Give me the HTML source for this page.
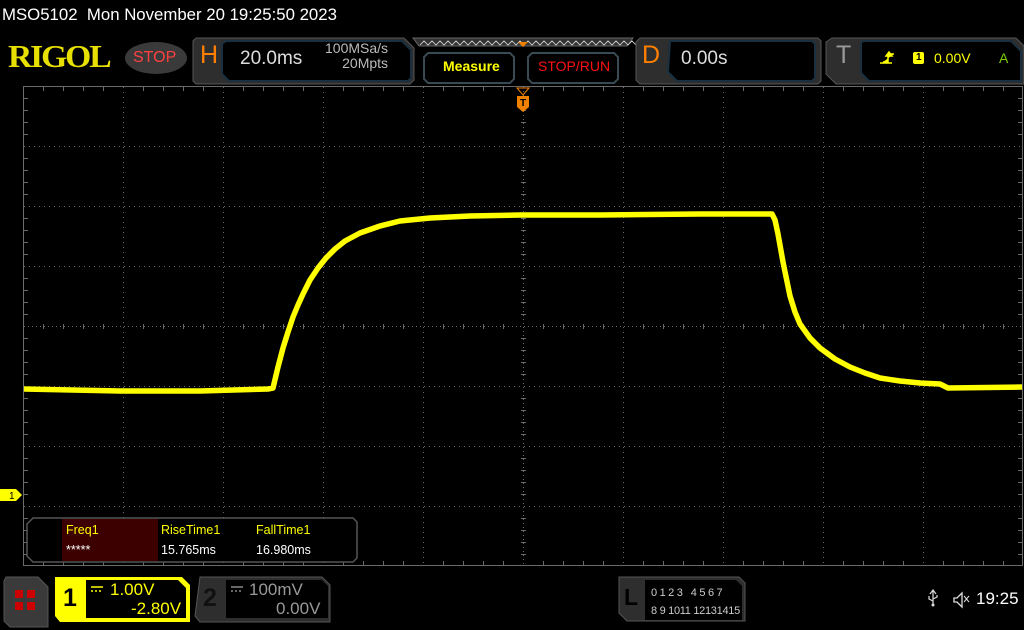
<!DOCTYPE html>
<html><head><meta charset="utf-8"><style>
body{margin:0;width:1024px;height:630px;background:#000;overflow:hidden;position:relative;font-family:"Liberation Sans","DejaVu Sans",sans-serif;}
.t{position:absolute;white-space:nowrap;}
</style></head><body>
<svg width="1024" height="630" style="position:absolute;left:0;top:0">
<g stroke="#6a6a6a" stroke-width="1" stroke-dasharray="1,4" fill="none">
<path d="M123.5 87V566M223.5 87V566M323.5 87V566M423.5 87V566M623.5 87V566M723.5 87V566M823.5 87V566M923.5 87V566"/>
<path d="M24 146.5H1022M24 206.5H1022M24 266.5H1022M24 386.5H1022M24 446.5H1022M24 506.5H1022"/>
<path d="M24 326.5H1022M523.5 87V566" stroke-dasharray="1,3"/>
</g>
<g stroke="#6a6a6a" stroke-width="1">
<path d="M23.5 86V566M23.5 86.5H1022M23.5 565.5H1022M1022.5 86V566"/>
</g>
<g stroke="#6a6a6a">
<path id="tx" d="M43.5 86v5M63.5 86v5M83.5 86v5M103.5 86v5M143.5 86v5M163.5 86v5M183.5 86v5M203.5 86v5M243.5 86v5M263.5 86v5M283.5 86v5M303.5 86v5M343.5 86v5M363.5 86v5M383.5 86v5M403.5 86v5M443.5 86v5M463.5 86v5M483.5 86v5M503.5 86v5M543.5 86v5M563.5 86v5M583.5 86v5M603.5 86v5M643.5 86v5M663.5 86v5M683.5 86v5M703.5 86v5M743.5 86v5M763.5 86v5M783.5 86v5M803.5 86v5M843.5 86v5M863.5 86v5M883.5 86v5M903.5 86v5M943.5 86v5M963.5 86v5M983.5 86v5M1003.5 86v5"/>
<use href="#tx" transform="translate(0,475)"/>
<use href="#tx" transform="translate(0,238)"/>
<path id="ty" d="M23 98.5h5M23 110.5h5M23 122.5h5M23 134.5h5M23 158.5h5M23 170.5h5M23 182.5h5M23 194.5h5M23 218.5h5M23 230.5h5M23 242.5h5M23 254.5h5M23 278.5h5M23 290.5h5M23 302.5h5M23 314.5h5M23 338.5h5M23 350.5h5M23 362.5h5M23 374.5h5M23 398.5h5M23 410.5h5M23 422.5h5M23 434.5h5M23 458.5h5M23 470.5h5M23 482.5h5M23 494.5h5M23 518.5h5M23 530.5h5M23 542.5h5M23 554.5h5"/>
<use href="#ty" transform="translate(995,0)"/>
<use href="#ty" transform="translate(498,0)"/>
</g>
<path d="M24 389 L120 391 L200 391 L268 389 L273 388 L278 367 L283 348 L288 332 L293 317 L298 305 L303 294 L310 280 L318 268 L326 258 L335 249 L345 241 L360 233 L380 226 L400 221 L430 218 L470 216 L520 215 L600 215 L700 214 L772 214 L775 220 L778 234 L783 262 L790 296 L795 312 L800 324 L810 338 L820 348 L835 359 L850 367 L865 373 L880 378 L900 381 L920 383 L940 384 L948 388 L1022 387"
 fill="none" stroke="#ffff00" stroke-width="5.5" stroke-linejoin="round"/>
<path d="M517 88h12l-6 7z" fill="none" stroke="#f08000"/>
<path d="M517 96h12v11l-6 5l-6-5z" fill="#f08000"/>
<text x="523" y="106" font-size="10" fill="#000" text-anchor="middle" font-family="Liberation Sans" font-weight="bold">T</text>
<path d="M0 489h16l6 6l-6 6h-16z" fill="#ffff00"/>
<text x="9" y="499" font-size="10" fill="#000" font-family="Liberation Sans">1</text>
<path d="M196 38h208l10 10v32l-4 4h-214l-3-3v-40z" fill="#2e2e2e" stroke="#555"/>
<path d="M226 41h176l9 9v28l-3 3h-179l-7-7v-30z" fill="#000" stroke="#1a3040" stroke-width="2"/>
<path d="M413 38h220l-6 8h-208z" fill="#333" stroke="#666"/>
<path d="M420 45 l4 -4l4 4l4-4l4 4l4-4l4 4l4-4l4 4l4-4l4 4l4-4l4 4l4-4l4 4l4-4l4 4l4-4l4 4l4-4l4 4l4-4l4 4l4-4l4 4l4-4l4 4l4-4l4 4l4-4l4 4l4-4l4 4l4-4l4 4l4-4l4 4l4-4l4 4l4-4l4 4l4-4l4 4l4-4l4 4l4-4l4 4l4-4l4 4l4-4l4 4l4-4l4 4l4-4l4 4l4-4l4 4l4-4l4 4" fill="none" stroke="#ddd" stroke-width="0.8"/>
<path d="M518 42h10l-5 5z" fill="#f08000"/>
<path d="M428 53h82l4 4v22l-4 4h-82l-4-4v-22z" fill="#000" stroke="#3a4a55" stroke-width="2"/>
<path d="M532 53h82l4 4v22l-4 4h-82l-4-4v-22z" fill="#000" stroke="#3a4a55" stroke-width="2"/>
<path d="M640 38h178l3 3v40l-3 3h-178l-4-4v-38z" fill="#2e2e2e" stroke="#555"/>
<path d="M670 41h142l3 3v34l-3 3h-135l-9-9z" fill="#000" stroke="#1a3040" stroke-width="2"/>
<path d="M832 38h184l8 8v38h-188l-10-10v-32z" fill="#2e2e2e" stroke="#555"/>
<path d="M863 41h148l10 10v30h-152l-8-8v-30z" fill="#000" stroke="#1a3040" stroke-width="2"/>
<ellipse cx="156" cy="58" rx="31" ry="16" fill="#3a3a3a"/>
<path d="M883 62h5v-8h6M886 56l3-4l3 4z M880 63h12" stroke="#ffff00" fill="#ffff00" stroke-width="1.5"/>
<rect x="913" y="52" width="11" height="12" rx="2" fill="#ffff00"/>
<path d="M33 518h320l4 4v36l-4 4h-320l-6-6v-32z" fill="#000" stroke="#555" stroke-width="1.5"/>
<rect x="62" y="519" width="96" height="42" fill="#3c0000"/>
<path d="M6 577h32l10 10v40h-38l-6-6v-40z" fill="#3a3a3a" stroke="#555"/>
<rect x="15" y="590" width="8" height="8" fill="#c00"/><rect x="27" y="590" width="8" height="8" fill="#c00"/>
<rect x="15" y="602" width="8" height="8" fill="#c00"/><rect x="27" y="602" width="8" height="8" fill="#c00"/>
<path d="M55 577h127l8 8v37h-130l-5-6z" fill="#ffff00"/>
<path d="M86 580h92l8 8v30h-100z" fill="#000"/>
<path d="M200 577h122l8 8v37h-130l-5-6z" fill="#2e2e2e" stroke="#555"/>
<path d="M226 580h96l6 6v32h-102z" fill="#000"/>
<path d="M619 577h120l6 6v38h-118l-8-8z" fill="#2e2e2e" stroke="#555"/>
<path d="M645 580h91l6 6v34h-97z" fill="#000"/>
<path d="M91 587h12M91 591h2M95 591h2M99 591h2" stroke="#ffff00" stroke-width="1.5"/>
<path d="M231 587h12M231 591h2M235 591h2M239 591h2" stroke="#888" stroke-width="1.5"/>
<path d="M933 590v14M930 594l3-4l3 4M929 596v3l4 2M937 595v2l-4 2" stroke="#ddd" fill="none" stroke-width="1.2"/>
<circle cx="933" cy="605" r="1.5" fill="#ddd"/>
<path d="M954 598h3l5-5v14l-5-5h-3z" fill="none" stroke="#ddd" stroke-width="1.3"/>
<path d="M964 596l5 6M969 596l-5 6" stroke="#ddd"/>
</svg>
<div class="t" style="left:2px;top:5px;font-size:16.8px;color:#fff">MSO5102&nbsp; Mon November 20 19:25:50 2023</div>
<div class="t" style="left:8px;top:38px;font:bold 32px 'Liberation Serif',serif;color:#e8e000;letter-spacing:-2px;transform:scaleX(1.05);transform-origin:left">RIGOL</div>
<div class="t" style="left:133px;top:49px;font-size:16px;color:#ff4040">STOP</div>
<div class="t" style="left:200px;top:41px;font-size:25px;color:#ff8000">H</div>
<div class="t" style="left:240px;top:48px;font-size:19px;color:#ddd">20.0ms</div>
<div class="t" style="left:325px;top:41px;font-size:14px;color:#bbb;line-height:15px;text-align:right">100MSa/s<br>20Mpts</div>
<div class="t" style="left:443px;top:58px;font:bold 14px 'Liberation Sans',sans-serif;color:#ffff00">Measure</div>
<div class="t" style="left:538px;top:58px;font:14px 'Liberation Sans',sans-serif;color:#ff1010">STOP/RUN</div>
<div class="t" style="left:642px;top:41px;font-size:25px;color:#ff8000">D</div>
<div class="t" style="left:681px;top:48px;font-size:19px;color:#ddd">0.00s</div>
<div class="t" style="left:836px;top:41px;font-size:25px;color:#999">T</div>
<div class="t" style="left:916px;top:52px;font:bold 10px sans-serif;color:#000">1</div>
<div class="t" style="left:934px;top:50px;font-size:14px;color:#ffff00">0.00V</div>
<div class="t" style="left:999px;top:50px;font-size:14px;color:#7fd000">A</div>
<div class="t" style="left:66px;top:523px;font-size:12.5px;color:#ffff00">Freq1</div>
<div class="t" style="left:66px;top:543px;font-size:12.5px;color:#fff">*****</div>
<div class="t" style="left:161px;top:523px;font-size:12.5px;color:#ffff00">RiseTime1</div>
<div class="t" style="left:161px;top:543px;font-size:12.5px;color:#fff">15.765ms</div>
<div class="t" style="left:256px;top:523px;font-size:12.5px;color:#ffff00">FallTime1</div>
<div class="t" style="left:256px;top:543px;font-size:12.5px;color:#fff">16.980ms</div>
<div class="t" style="left:63px;top:584px;font-size:25px;font-weight:bold;color:#000">1</div>
<div class="t" style="left:110px;top:580px;font-size:17px;color:#ffff00">1.00V</div>
<div class="t" style="left:131px;top:599px;font-size:17px;color:#ffff00">-2.80V</div>
<div class="t" style="left:203px;top:584px;font-size:25px;font-weight:bold;color:#111">2</div>
<div class="t" style="left:249px;top:580px;font-size:17px;color:#999">100mV</div>
<div class="t" style="left:276px;top:599px;font-size:17px;color:#999">0.00V</div>
<div class="t" style="left:624px;top:584px;font-size:23px;color:#000;font-weight:bold">L</div>
<div class="t" style="left:651px;top:584px;font-size:11px;color:#ccc;line-height:18px;letter-spacing:-0.3px">0 1 2 3&nbsp;&nbsp; 4 5 6 7<br>8 9 1011 12131415</div>
<div class="t" style="left:976px;top:589px;font-size:17px;color:#fff">19:25</div>
</body></html>
